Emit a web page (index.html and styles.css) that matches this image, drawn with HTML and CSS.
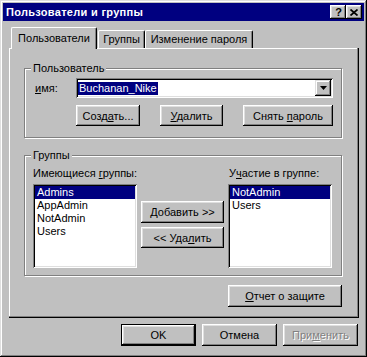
FILE: index.html
```
<!DOCTYPE html>
<html lang="ru">
<head>
<meta charset="utf-8">
<title>Пользователи и группы</title>
<link rel="stylesheet" href="styles.css">
</head>
<body>
<div class="window">
  <div class="titlebar">
    <span class="title">Пользователи и группы</span>
    <div class="tb-buttons">
      <span class="tb-btn tb-help">?</span>
      <span class="tb-btn"><svg width="8" height="7" viewBox="0 0 8 7"><path d="M0.5 0.5 L7.5 6.5 M7.5 0.5 L0.5 6.5" stroke="#000" stroke-width="1.7" fill="none"/></svg></span>
    </div>
  </div>
  <div class="content">
    <div class="tabs">
      <div class="tab active">Пользователи</div>
      <div class="tab tab-groups">Группы</div>
      <div class="tab tab-pass">Изменение пароля</div>
    </div>
    <div class="panel">
      <div class="group group-user">
        <span class="group-label">Пользователь</span>
        <div class="name-row">
          <span class="field-label"><u>и</u>мя:</span>
          <div class="combo">
            <span class="combo-text"><span class="sel">Buchanan_Nike</span></span>
            <span class="combo-btn"><svg width="7" height="4" viewBox="0 0 7 4"><path d="M0 0 H7 L3.5 4 Z" fill="#000"/></svg></span>
          </div>
        </div>
        <div class="user-buttons">
          <button class="btn b-create">Созд<u>а</u>ть...</button>
          <button class="btn b-delete"><u>У</u>далить</button>
          <button class="btn b-clear">Снять <u>п</u>ароль</button>
        </div>
      </div>
      <div class="group group-groups">
        <span class="group-label">Группы</span>
        <div class="cols">
          <div class="col-list">
            <div class="col-head">Имеющиеся <u>г</u>руппы:</div>
            <div class="listbox">
              <div class="item selected">Admins</div>
              <div class="item">AppAdmin</div>
              <div class="item">NotAdmin</div>
              <div class="item">Users</div>
            </div>
          </div>
          <div class="col-mid">
            <button class="btn b-add"><u>Д</u>обавить &gt;&gt;</button>
            <button class="btn b-remove">&lt;&lt; Уда<u>л</u>ить</button>
          </div>
          <div class="col-list">
            <div class="col-head col-head-right">У<u>ч</u>астие в группе:</div>
            <div class="listbox">
              <div class="item selected">NotAdmin</div>
              <div class="item">Users</div>
            </div>
          </div>
        </div>
      </div>
      <div class="report-row">
        <button class="btn b-report"><u>О</u>тчет о защите</button>
      </div>
    </div>
    <div class="dialog-buttons">
      <button class="btn btn-default">OK</button>
      <button class="btn">Отмена</button>
      <button class="btn disabled">При<u>м</u>енить</button>
    </div>
  </div>
</div>
</body>
</html>
```
FILE: styles.css
```
html, body {
  margin: 0;
  padding: 0;
  background: #c0c0c0;
}
body {
  font-family: "Liberation Sans", Arial, sans-serif;
  font-size: 11px;
  color: #000;
}
.window {
  width: 367px;
  height: 357px;
  box-sizing: border-box;
  padding: 3px;
  background: #c0c0c0;
  box-shadow: inset -1px -1px #000, inset 1px 1px #dfdfdf, inset -2px -2px #808080, inset 2px 2px #fff;
}
.titlebar {
  height: 18px;
  background: #000080;
  display: flex;
  align-items: center;
  justify-content: space-between;
  padding: 0 2px 0 3px;
}
.title {
  color: #fff;
  font-weight: bold;
  font-size: 11px;
  line-height: 14px;
  letter-spacing: 0.3px;
}
.tb-buttons {
  display: flex;
}
.tb-btn {
  width: 16px;
  height: 14px;
  box-sizing: border-box;
  background: #c0c0c0;
  box-shadow: inset -1px -1px #000, inset 1px 1px #fff, inset -2px -2px #808080, inset 2px 2px #dfdfdf;
  display: flex;
  align-items: center;
  justify-content: center;
}
.tb-help {
  font-weight: bold;
  font-size: 11px;
  line-height: 14px;
  padding-left: 1px;
}
.content {
  padding: 6px 5px 0 6px;
}
.tabs {
  height: 21px;
  display: flex;
  align-items: flex-end;
  padding-left: 2px;
}
.tab {
  position: relative;
  box-sizing: border-box;
  height: 18px;
  border-top: 1px solid #fff;
  border-left: 1px solid #fff;
  border-right: 1px solid #000;
  border-radius: 2px 2px 0 0;
  box-shadow: inset -1px 0 #808080;
  background: #c0c0c0;
  text-align: center;
  line-height: 14px;
  padding-top: 1px;
  white-space: nowrap;
}
.tab.active {
  z-index: 1;
  width: 86px;
  height: 22px;
  margin-bottom: -1px;
  padding-top: 3px;
}
.tab-groups {
  width: 47px;
  margin-left: 1px;
}
.tab-pass {
  width: 108px;
}
.panel {
  width: 350px;
  height: 270px;
  box-sizing: border-box;
  padding: 20px 17px 0 15px;
  background: #c0c0c0;
  box-shadow: inset -1px -1px #000, inset -2px -2px #808080, inset 1px 1px #fff;
}
.group {
  position: relative;
  box-sizing: border-box;
  width: 318px;
  border: 1px solid #808080;
  box-shadow: inset 1px 1px #fff, 1px 1px #fff;
}
.group-label {
  position: absolute;
  top: -7px;
  left: 6px;
  padding: 0 2px;
  line-height: 13px;
  background: #c0c0c0;
}
.group-user {
  height: 70px;
  padding: 9px 8px 0 10px;
}
.name-row {
  display: flex;
  align-items: center;
  height: 20px;
}
.field-label {
  width: 41px;
  flex: none;
}
.combo {
  flex: 1;
  height: 20px;
  box-sizing: border-box;
  background: #fff;
  box-shadow: inset 1px 1px #808080, inset -1px -1px #fff, inset 2px 2px #000, inset -2px -2px #dfdfdf;
  display: flex;
  align-items: center;
  justify-content: space-between;
  padding: 2px;
}
.combo-text {
  display: flex;
  align-items: center;
}
.sel {
  background: #000080;
  color: #fff;
  line-height: 13px;
  padding: 0 1px;
}
.combo-btn {
  width: 16px;
  height: 16px;
  box-sizing: border-box;
  background: #c0c0c0;
  box-shadow: inset -1px -1px #000, inset 1px 1px #dfdfdf, inset -2px -2px #808080, inset 2px 2px #fff;
  display: flex;
  align-items: center;
  justify-content: center;
}
.user-buttons {
  display: flex;
  justify-content: space-between;
  margin: 7px 0 0 41px;
}
.btn {
  font: inherit;
  color: #000;
  background: #c0c0c0;
  border: none;
  padding: 0;
  margin: 0;
  height: 22px;
  box-sizing: border-box;
  box-shadow: inset -1px -1px #000, inset 1px 1px #fff, inset -2px -2px #808080, inset 2px 2px #dfdfdf;
  text-align: center;
  white-space: nowrap;
  line-height: 14px;
}
.b-create { width: 64px; height: 21px; }
.b-delete { width: 63px; height: 21px; }
.b-clear { width: 90px; height: 21px; }
.group-groups {
  margin-top: 17px;
  height: 121px;
  padding: 11px 9px 0 8px;
}
.cols {
  display: flex;
  gap: 4px;
}
.col-list {
  width: 104px;
}
.col-head {
  line-height: 13px;
  margin-bottom: 4px;
  white-space: nowrap;
}
.col-head-right {
  padding-left: 1px;
}
.listbox {
  height: 84px;
  box-sizing: border-box;
  background: #fff;
  padding: 2px;
  box-shadow: inset 1px 1px #808080, inset -1px -1px #fff, inset 2px 2px #000, inset -2px -2px #dfdfdf;
}
.item {
  line-height: 13px;
  padding-left: 2px;
  white-space: nowrap;
}
.item.selected {
  background: #000080;
  color: #fff;
}
.col-mid {
  width: 83px;
  padding-top: 34px;
  display: flex;
  flex-direction: column;
  gap: 4px;
}
.b-add { width: 83px; height: 22px; }
.b-remove { width: 83px; height: 21px; }
.report-row {
  display: flex;
  justify-content: flex-end;
  margin-top: 9px;
}
.b-report { width: 114px; height: 22px; }
.dialog-buttons {
  display: flex;
  justify-content: flex-end;
  gap: 6px;
  margin-top: 6px;
  padding-right: 1px;
}
.dialog-buttons .btn {
  width: 75px;
}
.btn-default {
  border: 1px solid #000;
}
.btn.disabled {
  color: #808080;
  text-shadow: 1px 1px #fff;
}
```
